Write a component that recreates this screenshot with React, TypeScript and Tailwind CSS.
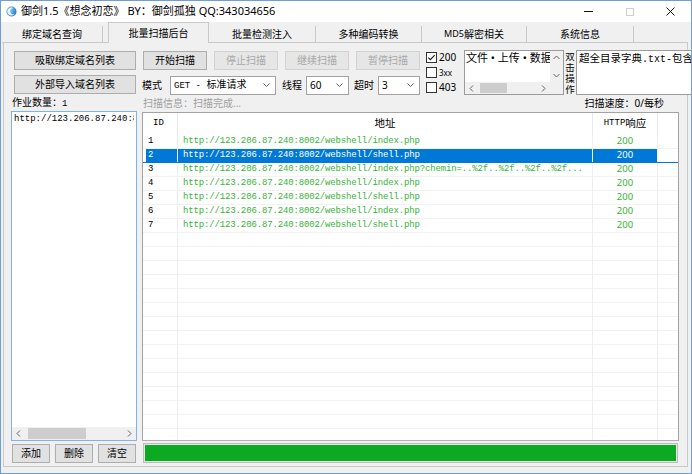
import type { ReactNode } from "react";

const rows = [
  { id: "1", url: "http://123.206.87.240:8002/webshell/index.php", code: "200" },
  { id: "2", url: "http://123.206.87.240:8002/webshell/shell.php", code: "200", selected: true },
  {
    id: "3",
    url: "http://123.206.87.240:8002/webshell/index.php?chemin=..%2f..%2f..%2f..%2f...",
    code: "200",
  },
  { id: "4", url: "http://123.206.87.240:8002/webshell/index.php", code: "200" },
  { id: "5", url: "http://123.206.87.240:8002/webshell/shell.php", code: "200" },
  { id: "6", url: "http://123.206.87.240:8002/webshell/index.php", code: "200" },
  { id: "7", url: "http://123.206.87.240:8002/webshell/shell.php", code: "200" },
];

const tabs = ["绑定域名查询", "批量扫描后台", "批量检测注入", "多种编码转换", "MD5解密相关", "系统信息"];

export default function App() {
  return (
    <div className="flex h-[474px] w-[692px] flex-col overflow-hidden border border-[#6d9fd6] bg-[#f0f0f0] font-['Noto_Sans','Noto_Sans_CJK_SC',sans-serif] text-[10px] text-black">
      <TitleBar />
      <TabStrip />

      <div className="mb-[6px] ml-[2px] mr-[3px] flex flex-1 flex-col border border-[#c9c9c9] px-[7px] pb-[3px] pt-[7px]">
        {/* top controls */}
        <div className="flex h-[46px]">
          <div className="flex w-[126px] flex-col pl-[3px] pt-[1px]">
            <Btn className="h-[19px] w-[122px]">吸取绑定域名列表</Btn>
            <Btn className="mt-[5px] h-[19px] w-[122px]">外部导入域名列表</Btn>
          </div>

          <div className="ml-[5px] flex flex-1">
            <div className="flex w-[280px] flex-col pt-[1px]">
              <div className="flex gap-[7px] pl-[2px]">
                <Btn className="h-[19px] w-[64px]">开始扫描</Btn>
                <Btn className="h-[19px] w-[64px]" disabled>停止扫描</Btn>
                <Btn className="h-[19px] w-[64px]" disabled>继续扫描</Btn>
                <Btn className="h-[19px] w-[64px]" disabled>暂停扫描</Btn>
              </div>
              <div className="mt-[5px] flex h-[20px] items-center">
                <span className="pl-[1px]">模式</span>
                <Select className="ml-[8px] w-[106px]">
                  <span className="font-['Liberation_Mono',monospace] text-[9px]">GET - </span>标准请求
                </Select>
                <span className="ml-[6px]">线程</span>
                <Select className="ml-[4px] w-[43px]">60</Select>
                <span className="ml-[5px]">超时</span>
                <Select className="ml-[4px] w-[42px]">3</Select>
              </div>
            </div>

            <div className="ml-[5px] flex w-[36px] flex-col">
              <Check checked label="200" />
              <Check label="3xx" small />
              <Check label="403" />
            </div>

            <div className="ml-[2px] flex h-[45px] w-[100px] flex-col border border-[#9c9c9c] bg-white">
              <div className="flex flex-1 overflow-hidden">
                <div className="w-[85px] overflow-hidden whitespace-nowrap pl-[1px] text-[11px] leading-[14px]">
                  文件 • 上传 • 数据库
                </div>
                <div className="flex w-[13px] flex-col items-center justify-between bg-[#f0f0f0] py-[4px]">
                  <Chevron dir="up" />
                  <Chevron dir="down" />
                </div>
              </div>
              <div className="flex h-[12px] items-center bg-[#f0f0f0]">
                <div className="flex w-[13px] justify-center">
                  <Chevron dir="left" />
                </div>
                <div className="ml-[2px] h-[10px] w-[27px] bg-[#cdcdcd]" />
                <div className="flex-1" />
                <div className="flex w-[13px] justify-center">
                  <Chevron dir="right" />
                </div>
                <div className="w-[13px]" />
              </div>
            </div>

            <div className="flex w-[12px] flex-col items-center pt-px text-[9.5px]">
              <span className="h-[11px] leading-[11px]">双</span>
              <span className="h-[11px] leading-[11px]">击</span>
              <span className="h-[11px] leading-[11px]">操</span>
              <span className="h-[11px] leading-[11px]">作</span>
            </div>

            <div className="h-[45px] flex-1 overflow-hidden whitespace-nowrap border border-[#9c9c9c] bg-white pl-[2px] text-[10.5px] leading-[14px]">
              超全目录字典<span className="font-['Liberation_Mono',monospace] text-[10px]">.txt-</span>包含
            </div>
          </div>
        </div>

        {/* labels */}
        <div className="flex h-[15px] items-center">
          <div className="w-[126px] pl-[1px]">
            作业数量：<span className="font-['Liberation_Mono',monospace] text-[9px]">1</span>
          </div>
          <div className="ml-[5px] flex flex-1 items-center">
            <span className="pl-[1px] text-[#a0a0a0]">扫描信息：扫描完成...</span>
            <span className="ml-auto pr-[16px]">扫描速度：0/每秒</span>
          </div>
        </div>

        {/* lists */}
        <div className="flex h-[330px]">
          <div className="flex w-[126px] flex-col border border-[#7eb4ea] bg-white">
            <div className="w-[122px] flex-1 overflow-hidden whitespace-nowrap pl-[2px] pt-[2px] font-['Liberation_Mono',monospace] text-[9px] leading-[11px]">
              http://123.206.87.240:8002/
            </div>
            <div className="flex h-[13px] items-center bg-[#f0f0f0]">
              <div className="flex w-[13px] justify-center">
                <Chevron dir="left" />
              </div>
              <div className="ml-[3px] h-[11px] w-[58px] bg-[#cdcdcd]" />
              <div className="flex-1" />
              <div className="flex w-[13px] justify-center">
                <Chevron dir="right" />
              </div>
            </div>
          </div>

          <div className="ml-[5px] mr-px mt-px flex flex-1 flex-col overflow-hidden border border-[#a3a3a3] border-b-[#bba9b8] bg-white">
            <div className="flex h-[22px] shrink-0 items-center">
              <div className="flex h-full w-[35px] items-center border-r border-[#e8e8e8] pl-[10px] font-['Liberation_Mono',monospace] text-[9px]">
                ID
              </div>
              <div className="flex h-full w-[415px] items-center justify-center border-r border-[#e8e8e8] text-[10.5px]">
                地址
              </div>
              <div className="flex h-full w-[65px] items-center justify-center border-r border-[#e8e8e8] text-[10.5px]">
                <span className="font-['Liberation_Mono',monospace] text-[9px]">HTTP</span>响应
              </div>
              <div className="flex-1" />
            </div>
            {rows.map((r) => (
              <Row key={r.id} {...r} />
            ))}
            {Array.from({ length: 16 }).map((_, i) => (
              <Row key={"e" + i} />
            ))}
          </div>
        </div>

        {/* bottom */}
        <div className="mt-[2px] flex h-[20px] items-center">
          <div className="flex w-[126px] gap-[5px] pl-[1px]">
            <Btn className="h-[19px] w-[38px]">添加</Btn>
            <Btn className="h-[19px] w-[38px]">删除</Btn>
            <Btn className="h-[19px] w-[38px]">清空</Btn>
          </div>
          <div className="ml-[6px] mr-[2px] h-[20px] flex-1 border border-[#bcbcbc] bg-[#e6e6e6] p-px">
            <div className="h-full w-full bg-[#0caa22]" />
          </div>
        </div>
      </div>
    </div>
  );
}

function TitleBar() {
  return (
    <div className="flex h-[21px] shrink-0 items-center bg-white">
      <svg width="11" height="11" viewBox="0 0 11 11" className="ml-[5px]">
        <defs>
          <radialGradient id="orb" cx="0.35" cy="0.35" r="0.8">
            <stop offset="0" stopColor="#8fd0ff" />
            <stop offset="1" stopColor="#1566c0" />
          </radialGradient>
        </defs>
        <circle cx="5.5" cy="5.5" r="5" fill="url(#orb)" />
        <path d="M7.5 2.2 A4 4 0 1 0 8.8 7.6 A3 3 0 1 1 7.5 2.2 Z" fill="#ffffff" opacity="0.85" />
      </svg>
      <span className="ml-[4px] text-[11px]">御剑1.5《想念初恋》 BY：御剑孤独 QQ:343034656</span>
      <div className="ml-auto flex h-full">
        <div className="flex w-[41px] items-center justify-center">
          <div className="h-px w-[9px] bg-[#111]" />
        </div>
        <div className="flex w-[41px] items-center justify-center">
          <div className="h-[8px] w-[8px] border border-[#cfcfcf]" />
        </div>
        <div className="flex w-[41px] items-center justify-center">
          <svg width="9" height="9" viewBox="0 0 9 9">
            <path d="M0.5 0.5 L8.5 8.5 M8.5 0.5 L0.5 8.5" stroke="#111" strokeWidth="1" />
          </svg>
        </div>
      </div>
    </div>
  );
}

function TabStrip() {
  return (
    <div className="relative z-10 -mb-px flex h-[21px] shrink-0 items-end pl-[1px]">
      <Tab className="w-[101px]">{tabs[0]}</Tab>
      <div className="ml-[5px] flex h-[21px] w-[101px] items-center justify-center border-x border-t border-[#c9c9c9] bg-[#f0f0f0] pt-[1px]">
        {tabs[1]}
      </div>
      <Tab className="w-[107px]">{tabs[2]}</Tab>
      <Tab className="w-[106px]">{tabs[3]}</Tab>
      <Tab className="w-[105px]">
        <span className="text-[9px]">MD5</span>解密相关
      </Tab>
      <Tab className="w-[107px]">{tabs[5]}</Tab>
    </div>
  );
}

function Tab({ className, children }: { className: string; children: ReactNode }) {
  return (
    <div className={`flex h-[17px] items-center justify-center border-r border-b border-[#c9c9c9] ${className}`}>
      {children}
    </div>
  );
}

function Btn({ className, disabled, children }: { className: string; disabled?: boolean; children: ReactNode }) {
  return (
    <div
      className={`flex items-center justify-center border ${
        disabled ? "border-[#d2d2d2] bg-[#e6e6e6] text-[#a8a8a8]" : "border-[#adadad] bg-[#e1e1e1]"
      } ${className}`}
    >
      {children}
    </div>
  );
}

function Select({ className, children }: { className: string; children: ReactNode }) {
  return (
    <div className={`flex h-[19px] items-center border border-[#a2a2a2] bg-white pl-[3px] pr-[5px] ${className}`}>
      <span className="flex-1 overflow-hidden whitespace-nowrap">{children}</span>
      <svg width="7" height="4" viewBox="0 0 7 4">
        <path d="M0.5 0.5 L3.5 3.5 L6.5 0.5" stroke="#606060" fill="none" strokeWidth="1" />
      </svg>
    </div>
  );
}

function Check({ label, checked, small }: { label: string; checked?: boolean; small?: boolean }) {
  return (
    <div className="flex h-[15px] items-center">
      <svg width="11" height="11" viewBox="0 0 11 11">
        <rect x="0.5" y="0.5" width="10" height="10" fill="#fff" stroke="#333" />
        {checked && <path d="M2.3 5.6 L4.4 7.7 L8.7 3.2" stroke="#222" strokeWidth="1.2" fill="none" />}
      </svg>
      <span className={`ml-[2px] ${small ? "text-[8px]" : "text-[10px]"}`}>{label}</span>
    </div>
  );
}

function Chevron({ dir }: { dir: "up" | "down" | "left" | "right" }) {
  const d = {
    up: "M0.5 4 L3.5 1 L6.5 4",
    down: "M0.5 1 L3.5 4 L6.5 1",
    left: "M4 0.5 L1 3.5 L4 6.5",
    right: "M1 0.5 L4 3.5 L1 6.5",
  }[dir];
  const vertical = dir === "up" || dir === "down";
  return (
    <svg width={vertical ? 7 : 5} height={vertical ? 5 : 7} viewBox={vertical ? "0 0 7 5" : "0 0 5 7"}>
      <path d={d} stroke="#606060" fill="none" strokeWidth="1" />
    </svg>
  );
}

function Row({ id, url, code, selected }: { id?: string; url?: string; code?: string; selected?: boolean }) {
  const bg = selected ? "bg-[#0078d7]" : "";
  const txt = selected ? "text-white" : "text-[#37b337]";
  return (
    <div className={`flex h-[14px] shrink-0 border-b ${selected ? "border-[#0078d7]" : "border-[#f2f2f2]"}`}>
      <div className="h-full w-[35px] border-r border-[#eeeeee]">
        <div
          className={`ml-[3px] flex h-full items-center pl-[2px] font-['Liberation_Mono',monospace] text-[9px] ${bg} ${
            selected ? "text-white" : "text-black"
          }`}
        >
          {id}
        </div>
      </div>
      <div
        className={`flex h-full w-[415px] items-center overflow-hidden whitespace-nowrap border-r border-[#eeeeee] pl-[5px] font-['Liberation_Mono',monospace] text-[9px] tracking-[-0.14px] ${bg} ${txt}`}
      >
        {url}
      </div>
      <div
        className={`flex h-full w-[65px] items-center justify-center border-r border-[#eeeeee] text-[9.5px] ${bg} ${txt}`}
      >
        {code}
      </div>
      <div className="flex-1" />
    </div>
  );
}
